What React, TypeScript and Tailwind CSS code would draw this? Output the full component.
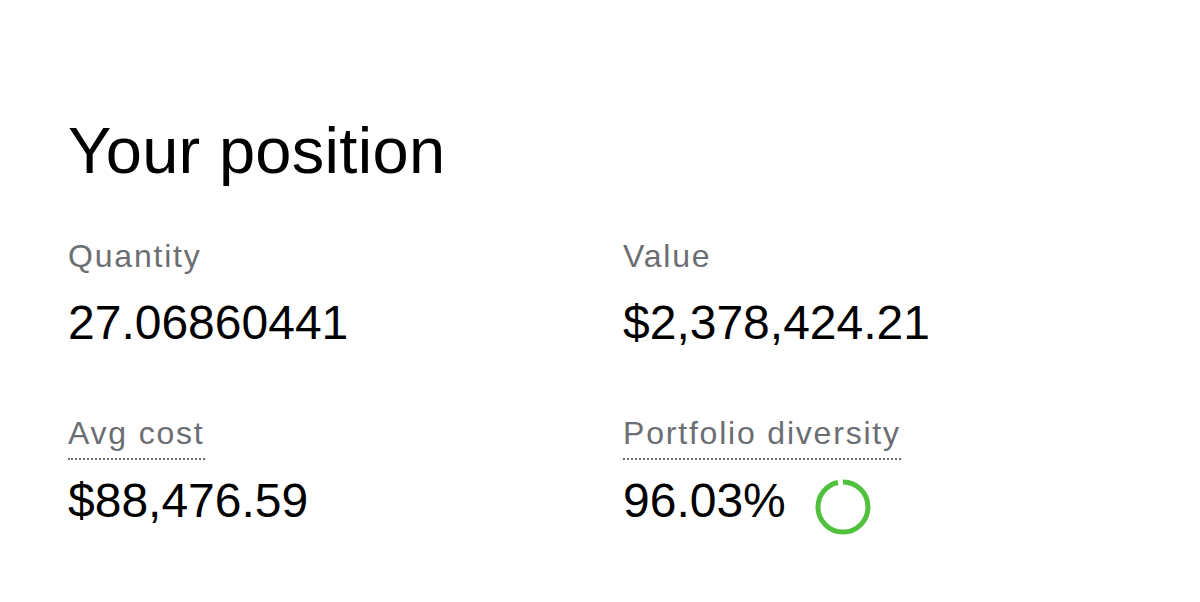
import React from "react";

function Ring({ pct }: { pct: number }) {
  const r = 25;
  const c = 2 * Math.PI * r;
  const len = (c * pct) / 100;
  return (
    <svg width="56" height="56" viewBox="0 0 56 56" className="mt-[6px] ml-[29px] shrink-0">
      <circle
        cx="28"
        cy="28"
        r={r}
        fill="none"
        stroke="#4fc13c"
        strokeWidth="5"
        strokeDasharray={`${len} ${c}`}
        transform="rotate(-90 28 28)"
      />
    </svg>
  );
}

export default function App() {
  const font = { fontFamily: '"Liberation Sans", Arial, sans-serif' };
  return (
    <div className="w-[1200px] h-[602px] bg-white pl-[68px] pt-[115px]" style={font}>
      <h1 className="text-[65px] leading-[72px] tracking-[0.3px] text-black font-normal">Your position</h1>
      <div className="grid grid-cols-[555px_555px] mt-[51px]">
        <div>
          <div className="text-[32px] leading-[36px] tracking-[1.8px] text-[#6b6e72]">Quantity</div>
          <div className="mt-[21px] text-[48px] leading-[56px] text-black">27.06860441</div>
        </div>
        <div>
          <div className="text-[32px] leading-[36px] tracking-[1.8px] text-[#6b6e72]">Value</div>
          <div className="mt-[21px] text-[48px] leading-[56px] text-black">$2,378,424.21</div>
        </div>
        <div className="mt-[64px]">
          <div className="inline-block text-[32px] leading-[36px] tracking-[1.8px] text-[#6b6e72] pb-[7px] border-b-[2px] border-dotted border-[#6b6e72]">
            Avg cost
          </div>
          <div className="mt-[13px] text-[48px] leading-[56px] text-black">$88,476.59</div>
        </div>
        <div className="mt-[64px]">
          <div className="inline-block text-[32px] leading-[36px] tracking-[1.8px] text-[#6b6e72] pb-[7px] border-b-[2px] border-dotted border-[#6b6e72]">
            Portfolio diversity
          </div>
          <div className="mt-[13px] flex items-start">
            <span className="text-[48px] leading-[56px] text-black">96.03%</span>
            <Ring pct={96.03} />
          </div>
        </div>
      </div>
    </div>
  );
}
